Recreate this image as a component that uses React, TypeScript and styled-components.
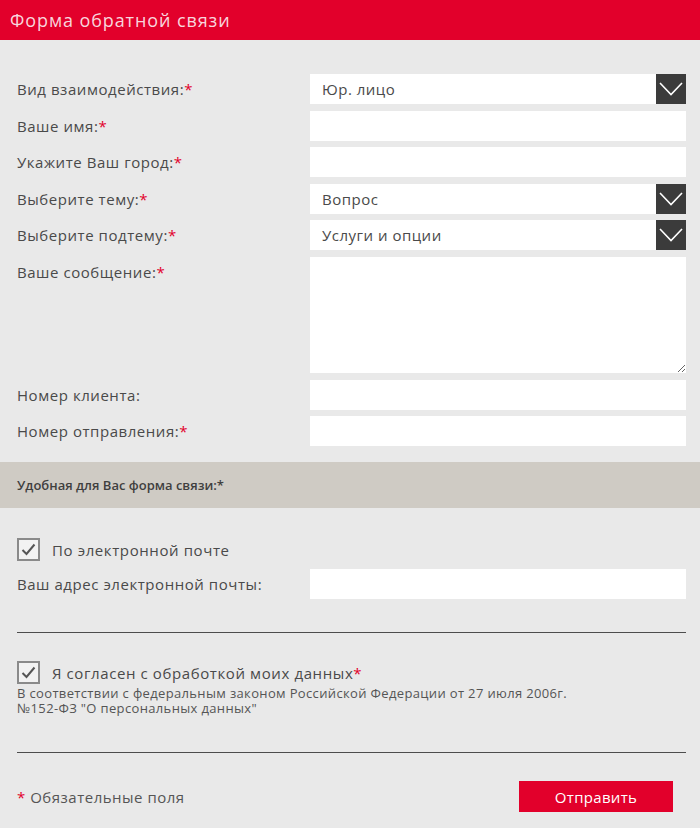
import React from "react";
import styled, { createGlobalStyle } from "styled-components";

const Global = createGlobalStyle`
  html, body { margin: 0; padding: 0; background: #e9e9e9; }
  body { font-family: "Open Sans", "Liberation Sans", sans-serif; color: #4a4a4a; }
  * { box-sizing: border-box; }
`;

const Page = styled.div`
  width: 700px;
  min-height: 828px;
  background: #e9e9e9;
`;

const Header = styled.div`
  height: 40px;
  background: #e2002b;
  display: flex;
  align-items: center;
  padding-left: 10px;
`;

const Title = styled.h1`
  margin: 0;
  font-size: 18px;
  font-weight: 400;
  color: #f8d5dc;
  letter-spacing: 0.9px;
`;

const Grid = styled.div`
  display: grid;
  grid-template-columns: 1fr 376px;
  row-gap: 6.6px;
  padding: 34px 14px 0 17px;
  align-items: start;
`;

const Label = styled.label`
  font-size: 15px;
  line-height: 30px;
  color: #4a4a4a;
  white-space: nowrap;
  letter-spacing: 0.55px;
`;

const Star = styled.span`
  color: #e2002b;
`;

const Input = styled.input`
  display: block;
  width: 100%;
  height: 30px;
  border: none;
  outline: none;
  background: #fff;
  padding: 0 12px;
  font-family: inherit;
  font-size: 15px;
  color: #4a4a4a;
`;

const TextArea = styled.textarea`
  display: block;
  width: 100%;
  height: 116px;
  border: none;
  outline: none;
  background: #fff;
  padding: 6px 12px;
  font-family: inherit;
  font-size: 15px;
  resize: vertical;
`;

const SelectBox = styled.div`
  display: flex;
  height: 30px;
  background: #fff;
`;

const SelectValue = styled.div`
  flex: 1;
  padding: 0 12px;
  font-size: 15px;
  line-height: 30px;
  color: #4a4a4a;
  letter-spacing: 0.5px;
`;

const Arrow = styled.div`
  width: 30px;
  height: 30px;
  background: #3b3b3b;
  display: flex;
  align-items: center;
  justify-content: center;
`;

const Band = styled.div`
  margin-top: 16px;
  height: 46px;
  background: #cfcbc4;
  display: flex;
  align-items: center;
  padding-left: 17px;
  font-size: 13px;
  font-weight: 600;
  color: #3f3f3f;
`;

const Section = styled.div<{ $top: number }>`
  padding: ${(p) => p.$top}px 14px 0 17px;
`;

const CheckRow = styled.div`
  display: flex;
  align-items: center;
  gap: 12px;
  font-size: 15px;
  color: #4a4a4a;
  letter-spacing: 0.6px;
`;

const Check = styled.div`
  width: 23px;
  height: 23px;
  flex: none;
  border: 2px solid #8a8a8a;
  background: #f2f2f2;
  display: flex;
  align-items: center;
  justify-content: center;
`;

const EmailRow = styled.div`
  display: grid;
  grid-template-columns: 1fr 376px;
  margin-top: 8px;
`;

const Rule = styled.div`
  height: 1px;
  background: #4d4d4d;
`;

const Note = styled.p`
  margin: 2px 0 0;
  font-size: 13px;
  line-height: 15px;
  color: #555;
  letter-spacing: 0.35px;
`;

const Footer = styled.div`
  display: flex;
  justify-content: space-between;
  align-items: center;
  padding: 0 27px 0 17px;
  margin-top: 28px;
`;

const Required = styled.div`
  font-size: 15px;
  color: #555;
  letter-spacing: 0.5px;
`;

const Button = styled.button`
  width: 154px;
  height: 31px;
  border: none;
  background: #e2002b;
  color: #fff;
  font-family: inherit;
  font-size: 15px;
  letter-spacing: 0.3px;
  cursor: pointer;
`;

const Chevron = () => (
  <svg width="24" height="14" viewBox="0 0 24 14">
    <path d="M1 1 L12 12.5 L23 1" fill="none" stroke="#fff" strokeWidth="1.6" />
  </svg>
);

const Tick = () => (
  <svg width="15" height="13" viewBox="0 0 15 13">
    <path d="M1.5 7 L5.5 11 L13.5 1.5" fill="none" stroke="#555" strokeWidth="2" />
  </svg>
);

const Select = ({ value }: { value: string }) => (
  <SelectBox>
    <SelectValue>{value}</SelectValue>
    <Arrow>
      <Chevron />
    </Arrow>
  </SelectBox>
);

const Req = ({ text }: { text: string }) => (
  <Label>
    {text}
    <Star>*</Star>
  </Label>
);

export default function App() {
  return (
    <Page>
      <Global />
      <Header>
        <Title>Форма обратной связи</Title>
      </Header>
      <Grid>
        <Req text="Вид взаимодействия:" />
        <Select value="Юр. лицо" />
        <Req text="Ваше имя:" />
        <Input />
        <Req text="Укажите Ваш город:" />
        <Input />
        <Req text="Выберите тему:" />
        <Select value="Вопрос" />
        <Req text="Выберите подтему:" />
        <Select value="Услуги и опции" />
        <Req text="Ваше сообщение:" />
        <TextArea />
        <Label>Номер клиента:</Label>
        <Input />
        <Req text="Номер отправления:" />
        <Input />
      </Grid>
      <Band>Удобная для Вас форма связи:*</Band>
      <Section $top={30}>
        <CheckRow>
          <Check>
            <Tick />
          </Check>
          По электронной почте
        </CheckRow>
        <EmailRow>
          <Label>Ваш адрес электронной почты:</Label>
          <Input />
        </EmailRow>
      </Section>
      <Section $top={33}>
        <Rule />
      </Section>
      <Section $top={28}>
        <CheckRow>
          <Check>
            <Tick />
          </Check>
          <span>
            Я согласен с обработкой моих данных<Star>*</Star>
          </span>
        </CheckRow>
        <Note>
          В соответствии с федеральным законом Российской Федерации от 27 июля 2006г.
          <br />
          №152-ФЗ "О персональных данных"
        </Note>
      </Section>
      <Section $top={36}>
        <Rule />
      </Section>
      <Footer>
        <Required>
          <Star>*</Star> Обязательные поля
        </Required>
        <Button>Отправить</Button>
      </Footer>
    </Page>
  );
}
